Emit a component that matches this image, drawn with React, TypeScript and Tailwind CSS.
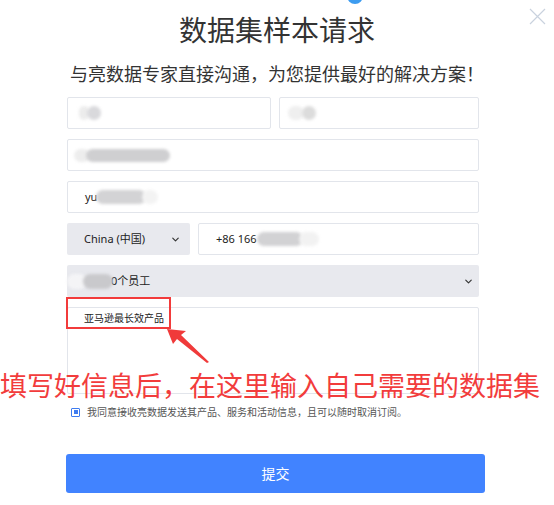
import { ChevronDown } from "lucide-react";

const field =
  "h-[32px] border border-[#e2e5eb] rounded-[2px] bg-white flex items-center";
const blob = "rounded-full blur-[1.5px]";

const App = () => {
  return (
    <div
      className="relative w-[554px] h-[505px] bg-white overflow-hidden text-[#333]"
      style={{ fontFamily: '"Noto Sans", "Noto Sans CJK SC", sans-serif' }}
    >
      {/* top blue dot, cut off by the frame */}
      <div className="absolute left-[347px] top-[-12px] w-[16px] h-[16px] rounded-full bg-[#3d9cf0]" />

      {/* close */}
      <svg
        className="absolute left-[529px] top-[8px]"
        width="17"
        height="17"
        viewBox="0 0 17 17"
        fill="none"
        stroke="#c9d2de"
        strokeWidth="1.2"
      >
        <path d="M1 1L16 16M16 1L1 16" />
      </svg>

      <h1 className="pt-[16px] text-center text-[28px] leading-none text-[#333]">
        数据集样本请求
      </h1>
      <p className="mt-[21px] text-center text-[18px] leading-none text-[#333]">
        与亮数据专家直接沟通，为您提供最好的解决方案！
      </p>

      <div className="ml-[66px] mt-[14px] w-[419px]">
        <div className="ml-[1px] w-[412px] flex flex-col gap-[10px]">
          <div className="flex gap-[8px]">
            <div className={`${field} flex-1 pl-[11px]`}>
              <div className="flex">
                <div className={`${blob} w-[10px] h-[14px] bg-[#ececec]`} />
                <div className={`${blob} w-[14px] h-[14px] bg-[#d9d9dc] -ml-[2px]`} />
              </div>
            </div>
            <div className={`${field} flex-1 pl-[8px]`}>
              <div className="flex">
                <div className={`${blob} w-[16px] h-[14px] bg-[#efefef]`} />
                <div className={`${blob} w-[14px] h-[14px] bg-[#dcdcdc] -ml-[2px]`} />
              </div>
            </div>
          </div>

          <div className={`${field} pl-[6px]`}>
            <div className="flex">
              <div className={`${blob} w-[16px] h-[13px] bg-[#ededed]`} />
              <div className={`${blob} w-[84px] h-[13px] bg-[#cfcfd1] -ml-[4px]`} />
            </div>
          </div>

          <div className={`${field} pl-[17px] text-[11px]`}>
            <span className="text-[#222]">yu</span>
            <div className="flex -ml-[1px]">
              <div className={`${blob} w-[50px] h-[14px] bg-[#d3d3d5]`} />
              <div className={`${blob} w-[16px] h-[14px] bg-[#f3f3f3] -ml-[4px]`} />
            </div>
          </div>

          <div className="flex gap-[8px]">
            <div className="h-[32px] w-[123px] rounded-[2px] bg-[#e8e9ee] flex items-center justify-between pl-[17px] pr-[9px] text-[11px] text-[#222]">
              <span>China (中国)</span>
              <ChevronDown size={11} strokeWidth={2.5} color="#333" />
            </div>
            <div className={`${field} flex-1 pl-[17px] text-[11px] text-[#222]`}>
              <span>+86 166</span>
              <div className="flex">
                <div className={`${blob} w-[46px] h-[14px] bg-[#d2d2d4]`} />
                <div className={`${blob} w-[20px] h-[14px] bg-[#f2f2f2] -ml-[4px]`} />
              </div>
            </div>
          </div>

          <div className="h-[32px] rounded-[2px] bg-[#e8e9ee] flex items-center justify-between pr-[5px] text-[11px] text-[#222]">
            <div className="flex items-center">
              <div className="flex">
                <div className={`${blob} w-[20px] h-[15px] bg-[#f4f4f6]`} />
                <div className={`${blob} w-[30px] h-[15px] bg-[#c9c9cc] -ml-[4px]`} />
              </div>
              <span className="-ml-[2px]">0个员工</span>
            </div>
            <ChevronDown size={11} strokeWidth={2.5} color="#333" />
          </div>

          <div className="h-[87px] border border-[#e2e5eb] rounded-[2px] bg-white pl-[16px] pt-[3px] text-[10px] text-[#222]">
            亚马逊最长效产品
          </div>
        </div>

        <div className="mt-[10px] h-[16px] flex items-center pl-[5px] gap-[7px]">
          <div className="w-[9px] h-[9px] border border-[#3f7cf0] rounded-[1px] flex items-center justify-center">
            <div className="w-[4px] h-[4px] bg-[#3f7cf0]" />
          </div>
          <span className="text-[10px] text-[#555] leading-none">
            我同意接收亮数据发送其产品、服务和活动信息，且可以随时取消订阅。
          </span>
        </div>

        <button className="mt-[34px] w-full h-[39px] rounded-[3px] bg-[#4183ff] text-white text-[14px]">
          提交
        </button>
      </div>

      {/* annotation overlay */}
      <div className="absolute left-[66px] top-[297px] w-[105px] h-[32px] border-2 border-[#f23b3b]" />
      <svg
        className="absolute left-[160px] top-[322px]"
        width="52"
        height="44"
        viewBox="0 0 52 44"
      >
        <polygon points="7,7 26,9 21,13 49,40 47,41 17,17 13,22" fill="#f03a3a" />
      </svg>
      <div className="absolute left-0 top-[372px] text-[27px] leading-none text-[#f23c3c] whitespace-nowrap">
        填写好信息后，在这里输入自己需要的数据集
      </div>
    </div>
  );
};

export default App;
